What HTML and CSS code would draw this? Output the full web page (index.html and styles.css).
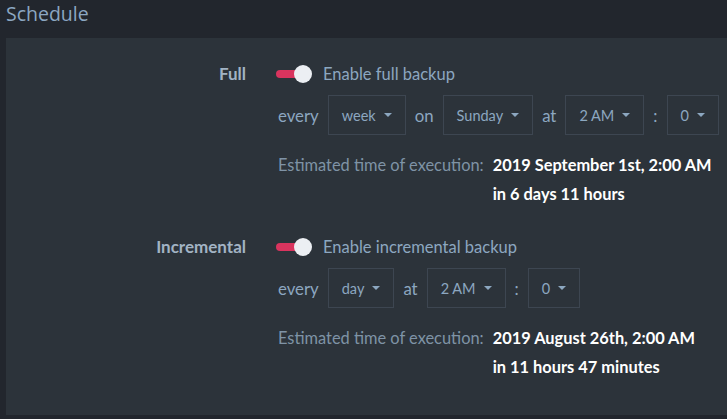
FILE: index.html
```html
<!DOCTYPE html>
<html>
<head>
<meta charset="utf-8">
<link rel="stylesheet" href="styles.css">
</head>
<body>
<h2 class="title">Schedule</h2>
<div class="panel">
  <div class="section">
    <div class="label">Full</div>
    <div class="content">
      <div class="toggle-row">
        <span class="toggle"><span class="track"></span><span class="knob"></span></span>
        <span class="toggle-text">Enable full backup</span>
      </div>
      <div class="select-row">
        <span class="word">every</span>
        <span class="select">week<span class="caret"></span></span>
        <span class="word">on</span>
        <span class="select">Sunday<span class="caret"></span></span>
        <span class="word">at</span>
        <span class="select">2 AM<span class="caret"></span></span>
        <span class="word">:</span>
        <span class="select">0<span class="caret"></span></span>
      </div>
      <div class="estimate">
        <span class="est-label">Estimated time of execution:</span>
        <div class="est-value">
          <div>2019 September 1st, 2:00 AM</div>
          <div>in 6 days 11 hours</div>
        </div>
      </div>
    </div>
  </div>
  <div class="section">
    <div class="label">Incremental</div>
    <div class="content">
      <div class="toggle-row">
        <span class="toggle"><span class="track"></span><span class="knob"></span></span>
        <span class="toggle-text">Enable incremental backup</span>
      </div>
      <div class="select-row">
        <span class="word">every</span>
        <span class="select">day<span class="caret"></span></span>
        <span class="word">at</span>
        <span class="select">2 AM<span class="caret"></span></span>
        <span class="word">:</span>
        <span class="select">0<span class="caret"></span></span>
      </div>
      <div class="estimate">
        <span class="est-label">Estimated time of execution:</span>
        <div class="est-value">
          <div>2019 August 26th, 2:00 AM</div>
          <div>in 11 hours 47 minutes</div>
        </div>
      </div>
    </div>
  </div>
</div>
</body>
</html>
```

FILE: styles.css
```css
html, body {
  margin: 0;
  padding: 0;
  background: #22262d;
  height: 100%;
  overflow: hidden;
}
body {
  font-family: Lato, "Open Sans", sans-serif;
  color: #8ba5bd;
}
.title {
  margin: 0;
  padding: 0 0 0 6px;
  height: 38px;
  line-height: 27px;
  font-family: "Open Sans", "Noto Sans", sans-serif;
  font-weight: 400;
  font-size: 19.5px;
  color: #8ca7c2;
}
.panel {
  margin-left: 6px;
  background: #2c333a;
  padding: 23px 0 34px 0;
  display: flex;
  flex-direction: column;
  gap: 26px;
}
.section {
  display: grid;
  grid-template-columns: 240px 1fr;
  column-gap: 30px;
}
.label {
  text-align: right;
  font-weight: 700;
  font-size: 17px;
  color: #a2b3c4;
  height: 26px;
  line-height: 26px;
}
.content {
  display: flex;
  flex-direction: column;
}
.toggle-row {
  height: 26px;
  display: flex;
  align-items: center;
}
.toggle {
  position: relative;
  width: 36px;
  height: 18px;
  display: inline-block;
}
.track {
  position: absolute;
  left: 0;
  top: 5px;
  width: 28px;
  height: 8px;
  border-radius: 4px;
  background: #d9345e;
}
.knob {
  position: absolute;
  left: 18px;
  top: 0;
  width: 18px;
  height: 18px;
  border-radius: 50%;
  background: #eceff3;
}
.toggle-text {
  margin-left: 11px;
  font-size: 16.5px;
  color: #8ca7c0;
}
.select-row {
  margin-top: 8px;
  display: flex;
  align-items: center;
  gap: 9px;
  padding-left: 2px;
  height: 40px;
}
.word {
  font-size: 16.8px;
  color: #8ca7c0;
}
.select {
  box-sizing: border-box;
  height: 40px;
  border: 1px solid #3d4651;
  padding: 0 13px;
  display: flex;
  align-items: center;
  font-size: 14.5px;
  color: #8ca7c0;
}
.caret {
  display: inline-block;
  width: 0;
  height: 0;
  margin-left: 8px;
  border-left: 4px solid transparent;
  border-right: 4px solid transparent;
  border-top: 4px solid #8ca7c0;
}
.estimate {
  margin-top: 15px;
  padding-left: 2px;
  display: flex;
  gap: 9px;
  line-height: 29px;
}
.est-label {
  font-size: 16.4px;
  color: #7f93a6;
}
.est-value {
  font-size: 16.4px;
  font-weight: 700;
  color: #ffffff;
}
```
